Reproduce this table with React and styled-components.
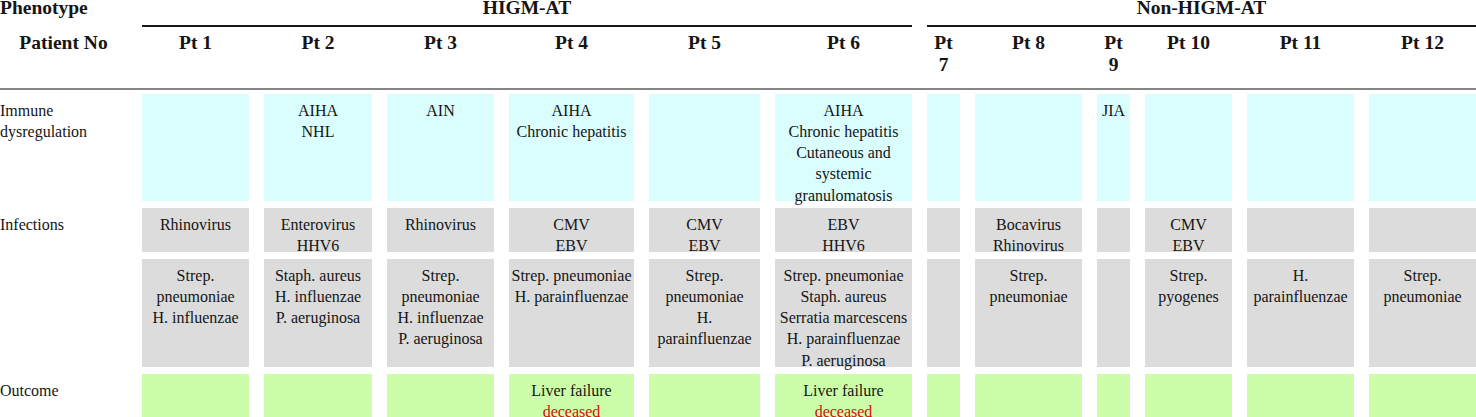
import styled, { createGlobalStyle } from 'styled-components';

const COLUMNS =
  '127px 107px 108px 107px 125px 111px 137px 33px 107px 33px 87px 107px 107px';

const patients = [
  {
    id: 1,
    immune: [],
    viral: ['Rhinovirus'],
    bacterial: ['Strep. pneumoniae', 'H. influenzae'],
    outcome: [],
  },
  {
    id: 2,
    immune: ['AIHA', 'NHL'],
    viral: ['Enterovirus', 'HHV6'],
    bacterial: ['Staph. aureus', 'H. influenzae', 'P. aeruginosa'],
    outcome: [],
  },
  {
    id: 3,
    immune: ['AIN'],
    viral: ['Rhinovirus'],
    bacterial: ['Strep. pneumoniae', 'H. influenzae', 'P. aeruginosa'],
    outcome: [],
  },
  {
    id: 4,
    immune: ['AIHA', 'Chronic hepatitis'],
    viral: ['CMV', 'EBV'],
    bacterial: ['Strep. pneumoniae', 'H. parainfluenzae'],
    outcome: ['Liver failure'],
    deceased: true,
  },
  {
    id: 5,
    immune: [],
    viral: ['CMV', 'EBV'],
    bacterial: ['Strep. pneumoniae', 'H. parainfluenzae'],
    outcome: [],
  },
  {
    id: 6,
    immune: [
      'AIHA',
      'Chronic hepatitis',
      'Cutaneous and systemic granulomatosis',
    ],
    viral: ['EBV', 'HHV6'],
    bacterial: [
      'Strep. pneumoniae',
      'Staph. aureus',
      'Serratia marcescens',
      'H. parainfluenzae',
      'P. aeruginosa',
    ],
    outcome: ['Liver failure'],
    deceased: true,
  },
  { id: 7, immune: [], viral: [], bacterial: [], outcome: [] },
  {
    id: 8,
    immune: [],
    viral: ['Bocavirus', 'Rhinovirus'],
    bacterial: ['Strep. pneumoniae'],
    outcome: [],
  },
  { id: 9, immune: ['JIA'], viral: [], bacterial: [], outcome: [] },
  {
    id: 10,
    immune: [],
    viral: ['CMV', 'EBV'],
    bacterial: ['Strep. pyogenes'],
    outcome: [],
  },
  {
    id: 11,
    immune: [],
    viral: [],
    bacterial: ['H. parainfluenzae'],
    outcome: [],
  },
  {
    id: 12,
    immune: [],
    viral: [],
    bacterial: ['Strep. pneumoniae'],
    outcome: [],
  },
];

const GlobalStyle = createGlobalStyle`
  html, body {
    margin: 0;
    padding: 0;
    background: #ffffff;
  }
  body {
    font-family: 'Liberation Serif', 'Times New Roman', serif;
    color: #151515;
    overflow: hidden;
  }
`;

const Table = styled.div`
  width: 1476px;
`;

const GroupRow = styled.div`
  display: grid;
  grid-template-columns: ${COLUMNS};
  column-gap: 15px;
`;

const GroupTitle = styled.div`
  grid-column: span ${(p) => p.$span};
  height: 25px;
  font-size: 19.5px;
  font-weight: 700;
  line-height: 16px;
  text-align: ${(p) => (p.$left ? 'left' : 'center')};
  border-bottom: 2px solid ${(p) => (p.$rule ? '#161616' : 'transparent')};
`;

const HeadRow = styled.div`
  display: grid;
  grid-template-columns: ${COLUMNS};
  column-gap: 15px;
  height: 61px;
  border-bottom: 2px solid #858585;
`;

const HeadCell = styled.div`
  padding: 4.5px 2px 0;
  font-size: 19.5px;
  font-weight: 700;
  line-height: 22.4px;
  text-align: center;
`;

const Body = styled.div`
  display: grid;
  grid-template-columns: ${COLUMNS};
  grid-template-rows: 107px 44px 108px 107px;
  column-gap: 15px;
  row-gap: 7px;
  padding-top: 4px;
`;

const tones = {
  immune: '#dafefe',
  infection: '#dcdcdc',
  outcome: '#ccfeaa',
};

const Cell = styled.div`
  background: ${(p) => tones[p.$tone]};
  padding-top: 5.5px;
  font-size: 16px;
  line-height: 21.3px;
  text-align: center;
  min-width: 0;
`;

const RowLabel = styled.div`
  padding-top: 5.5px;
  font-size: 16px;
  line-height: 21.3px;
  text-align: left;
`;

const Line = styled.div`
  color: ${(p) => (p.$alert ? '#d20f0f' : 'inherit')};
`;

const Lines = ({ items, deceased }) => (
  <>
    {items.map((t) => (
      <Line key={t}>{t}</Line>
    ))}
    {deceased && <Line $alert>deceased</Line>}
  </>
);

export default function App() {
  return (
    <>
      <GlobalStyle />
      <Table>
        <GroupRow>
          <GroupTitle $span={1} $left>
            Phenotype
          </GroupTitle>
          <GroupTitle $span={6} $rule>
            HIGM-AT
          </GroupTitle>
          <GroupTitle $span={6} $rule>
            Non-HIGM-AT
          </GroupTitle>
        </GroupRow>

        <HeadRow>
          <HeadCell>Patient No</HeadCell>
          {patients.map((p) => (
            <HeadCell key={p.id}>Pt {p.id}</HeadCell>
          ))}
        </HeadRow>

        <Body>
          <RowLabel>Immune dysregulation</RowLabel>
          {patients.map((p) => (
            <Cell key={p.id} $tone="immune">
              <Lines items={p.immune} />
            </Cell>
          ))}

          <RowLabel>Infections</RowLabel>
          {patients.map((p) => (
            <Cell key={p.id} $tone="infection">
              <Lines items={p.viral} />
            </Cell>
          ))}

          <RowLabel />
          {patients.map((p) => (
            <Cell key={p.id} $tone="infection">
              <Lines items={p.bacterial} />
            </Cell>
          ))}

          <RowLabel>Outcome</RowLabel>
          {patients.map((p) => (
            <Cell key={p.id} $tone="outcome">
              <Lines items={p.outcome} deceased={p.deceased} />
            </Cell>
          ))}
        </Body>
      </Table>
    </>
  );
}
